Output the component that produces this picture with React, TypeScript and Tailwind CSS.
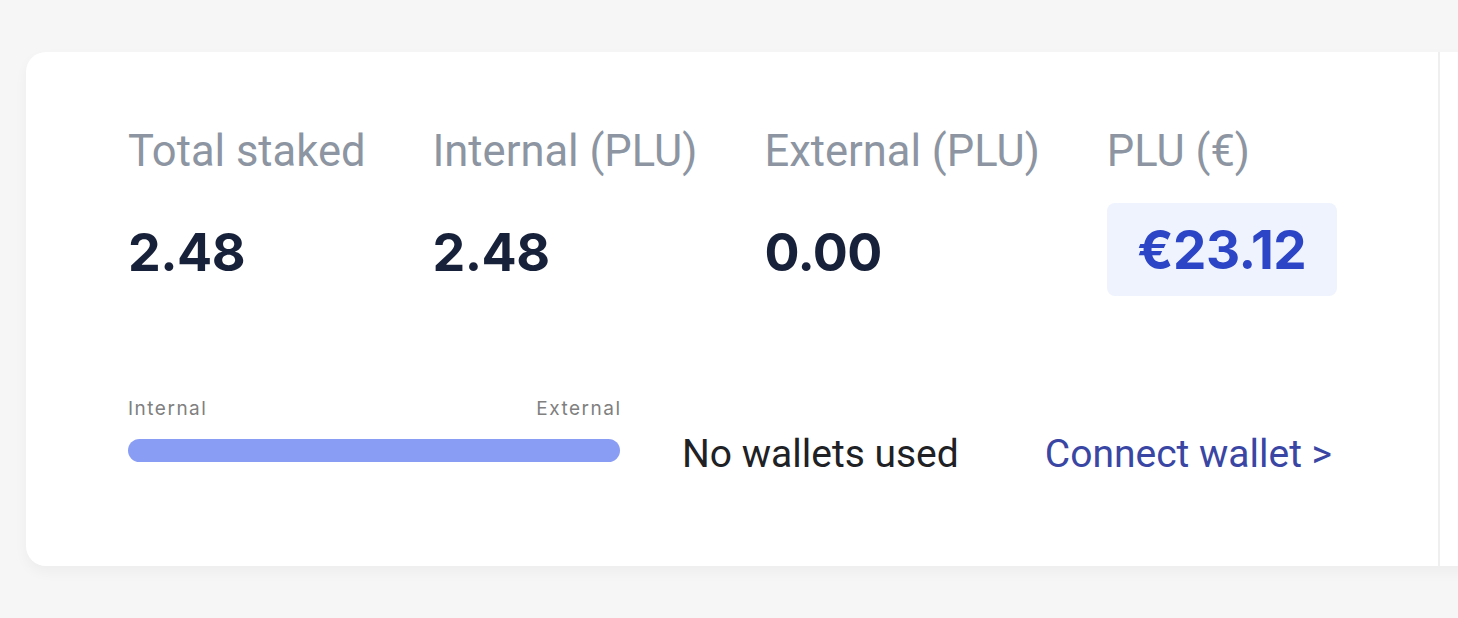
const Stat = ({ label, value }: { label: string; value: string }) => (
  <div className="flex flex-col">
    <p className="text-[43.5px] leading-[50px] text-[#8c95a1] font-['Roboto',sans-serif] whitespace-nowrap">{label}</p>
    <p className="mt-[46px] text-[52px] leading-[60px] font-bold text-[#18213a] font-['Inter',sans-serif] tracking-[-0.5px]">{value}</p>
  </div>
)

export default function App() {
  return (
    <div className="w-[1458px] h-[618px] overflow-hidden bg-[#f6f6f6] pl-[26px] pt-[52px]">
      <div className="flex w-[1600px] h-[514px] bg-white rounded-l-[20px] shadow-[0_6px_14px_rgba(0,0,0,0.04)]">
        <div className="w-[1414px] shrink-0 border-r-2 border-[#efefef] pl-[102px] pt-[75px]">
          <div className="flex gap-[67px]">
            <Stat label="Total staked" value="2.48" />
            <Stat label="Internal (PLU)" value="2.48" />
            <Stat label="External (PLU)" value="0.00" />
            <div className="flex flex-col">
              <p className="text-[43.5px] leading-[50px] text-[#8c95a1] font-['Roboto',sans-serif] whitespace-nowrap">PLU (€)</p>
              <div className="mt-[26px] w-[230px] h-[93px] rounded-[8px] bg-[#eef3fd] flex items-center justify-center">
                <span className="text-[53px] leading-[60px] font-bold text-[#2c44c6] font-['Inter',sans-serif] tracking-[-0.5px]">€23.12</span>
              </div>
            </div>
          </div>

          <div className="flex items-end mt-[103px]">
            <div className="w-[492px]">
              <div className="flex justify-between text-[19px] leading-[20px] tracking-[1.5px] text-[#808080] font-['Inter',sans-serif]">
                <span>Internal</span>
                <span className="-mr-[1.5px]">External</span>
              </div>
              <div className="mt-[20px] h-[23px] rounded-full bg-[#8a9df5]"></div>
            </div>
            <p className="ml-[62px] text-[39px] leading-[44px] -mb-[14px] text-[#202124] font-['Roboto',sans-serif] whitespace-nowrap">No wallets used</p>
            <a href="#" className="ml-[86px] text-[39px] leading-[44px] -mb-[14px] text-[#3a46a3] font-['Roboto',sans-serif] whitespace-nowrap">Connect wallet &gt;</a>
          </div>
        </div>
        <div className="flex-1"></div>
      </div>
    </div>
  )
}
